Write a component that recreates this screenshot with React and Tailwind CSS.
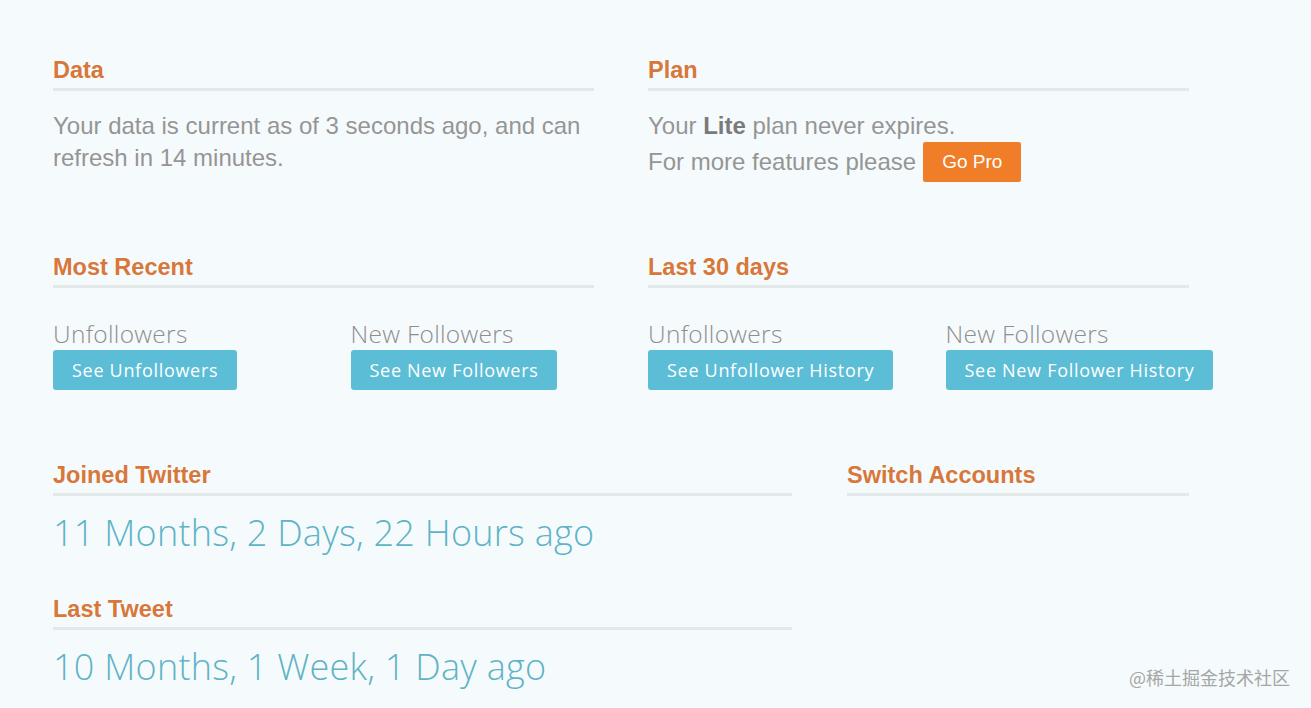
import React from "react";

const heading = "text-[23.5px] leading-[29px] font-bold text-[#d8773a]";
const rule = "mt-[3px] h-[3px] bg-[#e3e8e9]";
const bodyText = "text-[24px] leading-[32px] text-[#959595]";
const label = "text-[24.5px] leading-[32px] font-light text-[#8e8e8e] tracking-[0.3px]";
const blueBtn =
  "inline-block whitespace-nowrap rounded-[3px] bg-[#5bbdd6] px-[19px] h-[40px] leading-[40px] text-[18px] tracking-[0.7px] text-white";
const bigText = "text-[36px] leading-[44px] font-light text-[#5fb3c6] tracking-[0.25px]";

const Section = ({ title, children }) => (
  <div>
    <h2 className={heading}>{title}</h2>
    <div className={rule} />
    {children}
  </div>
);

const Stat = ({ title, button }) => (
  <div>
    <div className={label} style={{ fontFamily: '"Open Sans", sans-serif' }}>
      {title}
    </div>
    <button className={blueBtn} style={{ fontFamily: '"Open Sans", sans-serif' }}>
      {button}
    </button>
  </div>
);

export default function App() {
  return (
    <div
      className="relative min-h-[708px] bg-[#f5fbfc] pt-[56px] pl-[53px]"
      style={{ fontFamily: '"Liberation Sans", Arial, sans-serif' }}
    >
      <div className="w-[1136px]">
        {/* top row */}
        <div className="grid grid-cols-2 gap-x-[54px]">
          <Section title="Data">
            <p className={`${bodyText} mt-[19px]`}>
              Your data is current as of 3 seconds ago, and can refresh in 14 minutes.
            </p>
          </Section>
          <Section title="Plan">
            <p className={`${bodyText} mt-[19px]`}>
              Your <b className="text-[#7a7a7a]">Lite</b> plan never expires.
            </p>
            <div className="flex items-center">
              <span className={bodyText}>For more features please</span>
              <button className="ml-[7px] h-[40px] rounded-[2px] bg-[#f07d27] px-[19px] text-[19px] text-white">
                Go Pro
              </button>
            </div>
          </Section>
        </div>

        {/* followers row */}
        <div className="mt-[71px] grid grid-cols-2 gap-x-[54px]">
          <Section title="Most Recent">
            <div className="mt-[30px] grid grid-cols-2 gap-x-[54px]">
              <Stat title="Unfollowers" button="See Unfollowers" />
              <Stat title="New Followers" button="See New Followers" />
            </div>
          </Section>
          <Section title="Last 30 days">
            <div className="mt-[30px] grid grid-cols-2 gap-x-[54px]">
              <Stat title="Unfollowers" button="See Unfollower History" />
              <Stat title="New Followers" button="See New Follower History" />
            </div>
          </Section>
        </div>

        {/* bottom row */}
        <div className="mt-[71px] grid grid-cols-[739px_342px] gap-x-[55px]">
          <div>
            <Section title="Joined Twitter">
              <div
                className={`${bigText} mt-[15px]`}
                style={{ fontFamily: '"Open Sans", sans-serif' }}
              >
                11 Months, 2 Days, 22 Hours ago
              </div>
            </Section>
            <div className="mt-[40px]">
              <Section title="Last Tweet">
                <div
                  className={`${bigText} mt-[15px]`}
                  style={{ fontFamily: '"Open Sans", sans-serif' }}
                >
                  10 Months, 1 Week, 1 Day ago
                </div>
              </Section>
            </div>
          </div>
          <Section title="Switch Accounts" />
        </div>
      </div>

      <div
        className="absolute right-[21px] bottom-[20px] text-[18px] leading-[22px] text-[#a6a6a6]"
        style={{ fontFamily: '"Noto Sans CJK SC", sans-serif' }}
      >
        @稀土掘金技术社区
      </div>
    </div>
  );
}
